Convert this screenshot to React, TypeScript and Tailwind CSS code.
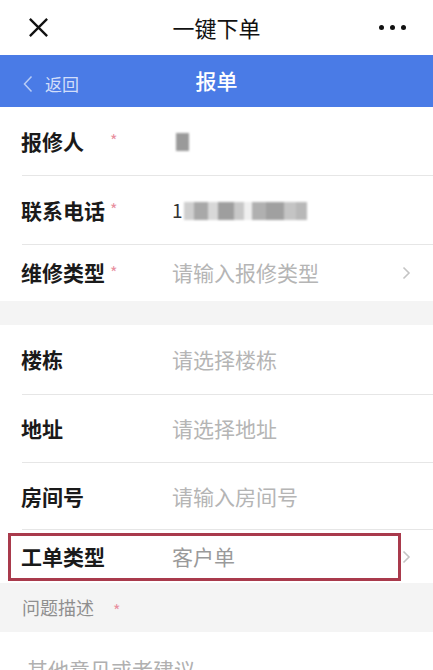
import React from "react";

const font = { fontFamily: '"Noto Sans CJK SC", "Noto Sans", sans-serif' };

function Star({ mt = "-mt-[3px]" }: { mt?: string }) {
  return <span className={`text-[16px] leading-none text-[#e8909f] ${mt}`}>*</span>;
}

function Chevron() {
  return (
    <svg width="9" height="14" viewBox="0 0 9 14" className="shrink-0">
      <path d="M1.5 1.5 L7 7 L1.5 12.5" fill="none" stroke="#c4c4c4" strokeWidth="1.6" />
    </svg>
  );
}

function Row({
  label,
  star,
  value,
  placeholder,
  chevron,
  h,
  divider = true,
}: {
  label: string;
  star?: boolean;
  value?: React.ReactNode;
  placeholder?: string;
  chevron?: boolean;
  h: string;
  divider?: boolean;
}) {
  return (
    <div className={`relative flex items-center pl-[21px] pr-[22px] ${h}`}>
      <div className="flex w-[151px] shrink-0 items-center">
        <span className="w-[89px] text-[21px] font-semibold text-[#1a1a1a] whitespace-nowrap">{label}</span>
        {star && <Star />}
      </div>
      <div className="flex-1 text-[21px] text-[#b5b5b5]">{value ?? placeholder}</div>
      {chevron && <Chevron />}
      {divider && <div className="absolute bottom-0 left-[22px] right-0 h-px bg-[#e6e6e6]" />}
    </div>
  );
}

export default function App() {
  return (
    <div className="w-[433px] h-[670px] overflow-hidden bg-white" style={font}>
      {/* top bar */}
      <div className="grid h-[55px] grid-cols-[1fr_auto_1fr] items-center px-[27px]">
        <svg width="23" height="23" viewBox="0 0 24 24">
          <path d="M3 3 L21 21 M21 3 L3 21" stroke="#111" strokeWidth="2.4" />
        </svg>
        <span className="text-[22px] text-[#111]">一键下单</span>
        <div className="flex justify-end gap-[6px] pr-[-2px]">
          <span className="h-[5px] w-[5px] rounded-full bg-[#111]" />
          <span className="h-[5px] w-[5px] rounded-full bg-[#111]" />
          <span className="h-[5px] w-[5px] rounded-full bg-[#111]" />
        </div>
      </div>
      {/* blue bar */}
      <div className="relative flex h-[52px] items-center justify-center bg-[#4a7be6]">
        <div className="absolute left-[23px] top-0 bottom-0 flex items-center gap-[12px] pt-[6px]">
          <svg width="10" height="18" viewBox="0 0 10 18">
            <path d="M8.5 1.5 L1.5 9 L8.5 16.5" fill="none" stroke="#b8ccf5" strokeWidth="1.5" />
          </svg>
          <span className="text-[17px] text-[#d2defa]">返回</span>
        </div>
        <span className="text-[21px] font-medium text-white">报单</span>
      </div>

      <Row
        label="报修人"
        star
        h="h-[69px]"
        value={<div className="ml-[4px] h-[18px] w-[13px] bg-[#9a9a9a] blur-[1px]" />}
      />
      <Row
        label="联系电话"
        star
        h="h-[69px]"
        value={
          <div className="flex items-center">
            <span className="text-[#333] text-[19px]">1</span>
            <div className="ml-[1px] flex h-[18px] w-[123px] blur-[1.2px]">
              <div className="w-[10px] bg-[#cfcfcf]" />
              <div className="w-[14px] bg-[#a8a8a8]" />
              <div className="w-[10px] bg-[#d8d8d8]" />
              <div className="w-[16px] bg-[#9e9e9e]" />
              <div className="w-[10px] bg-[#c8c8c8]" />
              <div className="w-[8px] bg-[#efefef]" />
              <div className="w-[14px] bg-[#b0b0b0]" />
              <div className="w-[18px] bg-[#a0a0a0]" />
              <div className="w-[12px] bg-[#c4c4c4]" />
              <div className="w-[11px] bg-[#b8b8b8]" />
            </div>
          </div>
        }
      />
      <Row label="维修类型" star placeholder="请输入报修类型" chevron h="h-[56px]" divider={false} />

      <div className="h-[24px] bg-[#f4f4f4]" />

      <Row label="楼栋" placeholder="请选择楼栋" h="h-[70px]" />
      <Row label="地址" placeholder="请选择地址" h="h-[68px]" />
      <Row label="房间号" placeholder="请输入房间号" h="h-[67px]" />

      <div className="relative flex h-[53px] items-center pr-[22px]">
        <div className="ml-[8px] flex h-[48px] w-[393px] items-center border-[3px] border-[#a93a4c] pl-[10px]">
          <span className="w-[151px] text-[21px] font-semibold text-[#1a1a1a]">工单类型</span>
          <span className="text-[21px] text-[#9a9a9a]">客户单</span>
        </div>
        <div className="ml-auto">
          <Chevron />
        </div>
      </div>

      <div className="flex h-[49px] items-center bg-[#f4f4f4] pl-[22px]">
        <span className="w-[91px] text-[18px] text-[#8f8f8f]">问题描述</span>
        <Star mt="mt-[4px]" />
      </div>

      <div className="pl-[27px] pt-[22px] text-[21px] text-[#b0b0b0]">其他意见或者建议</div>
    </div>
  );
}
